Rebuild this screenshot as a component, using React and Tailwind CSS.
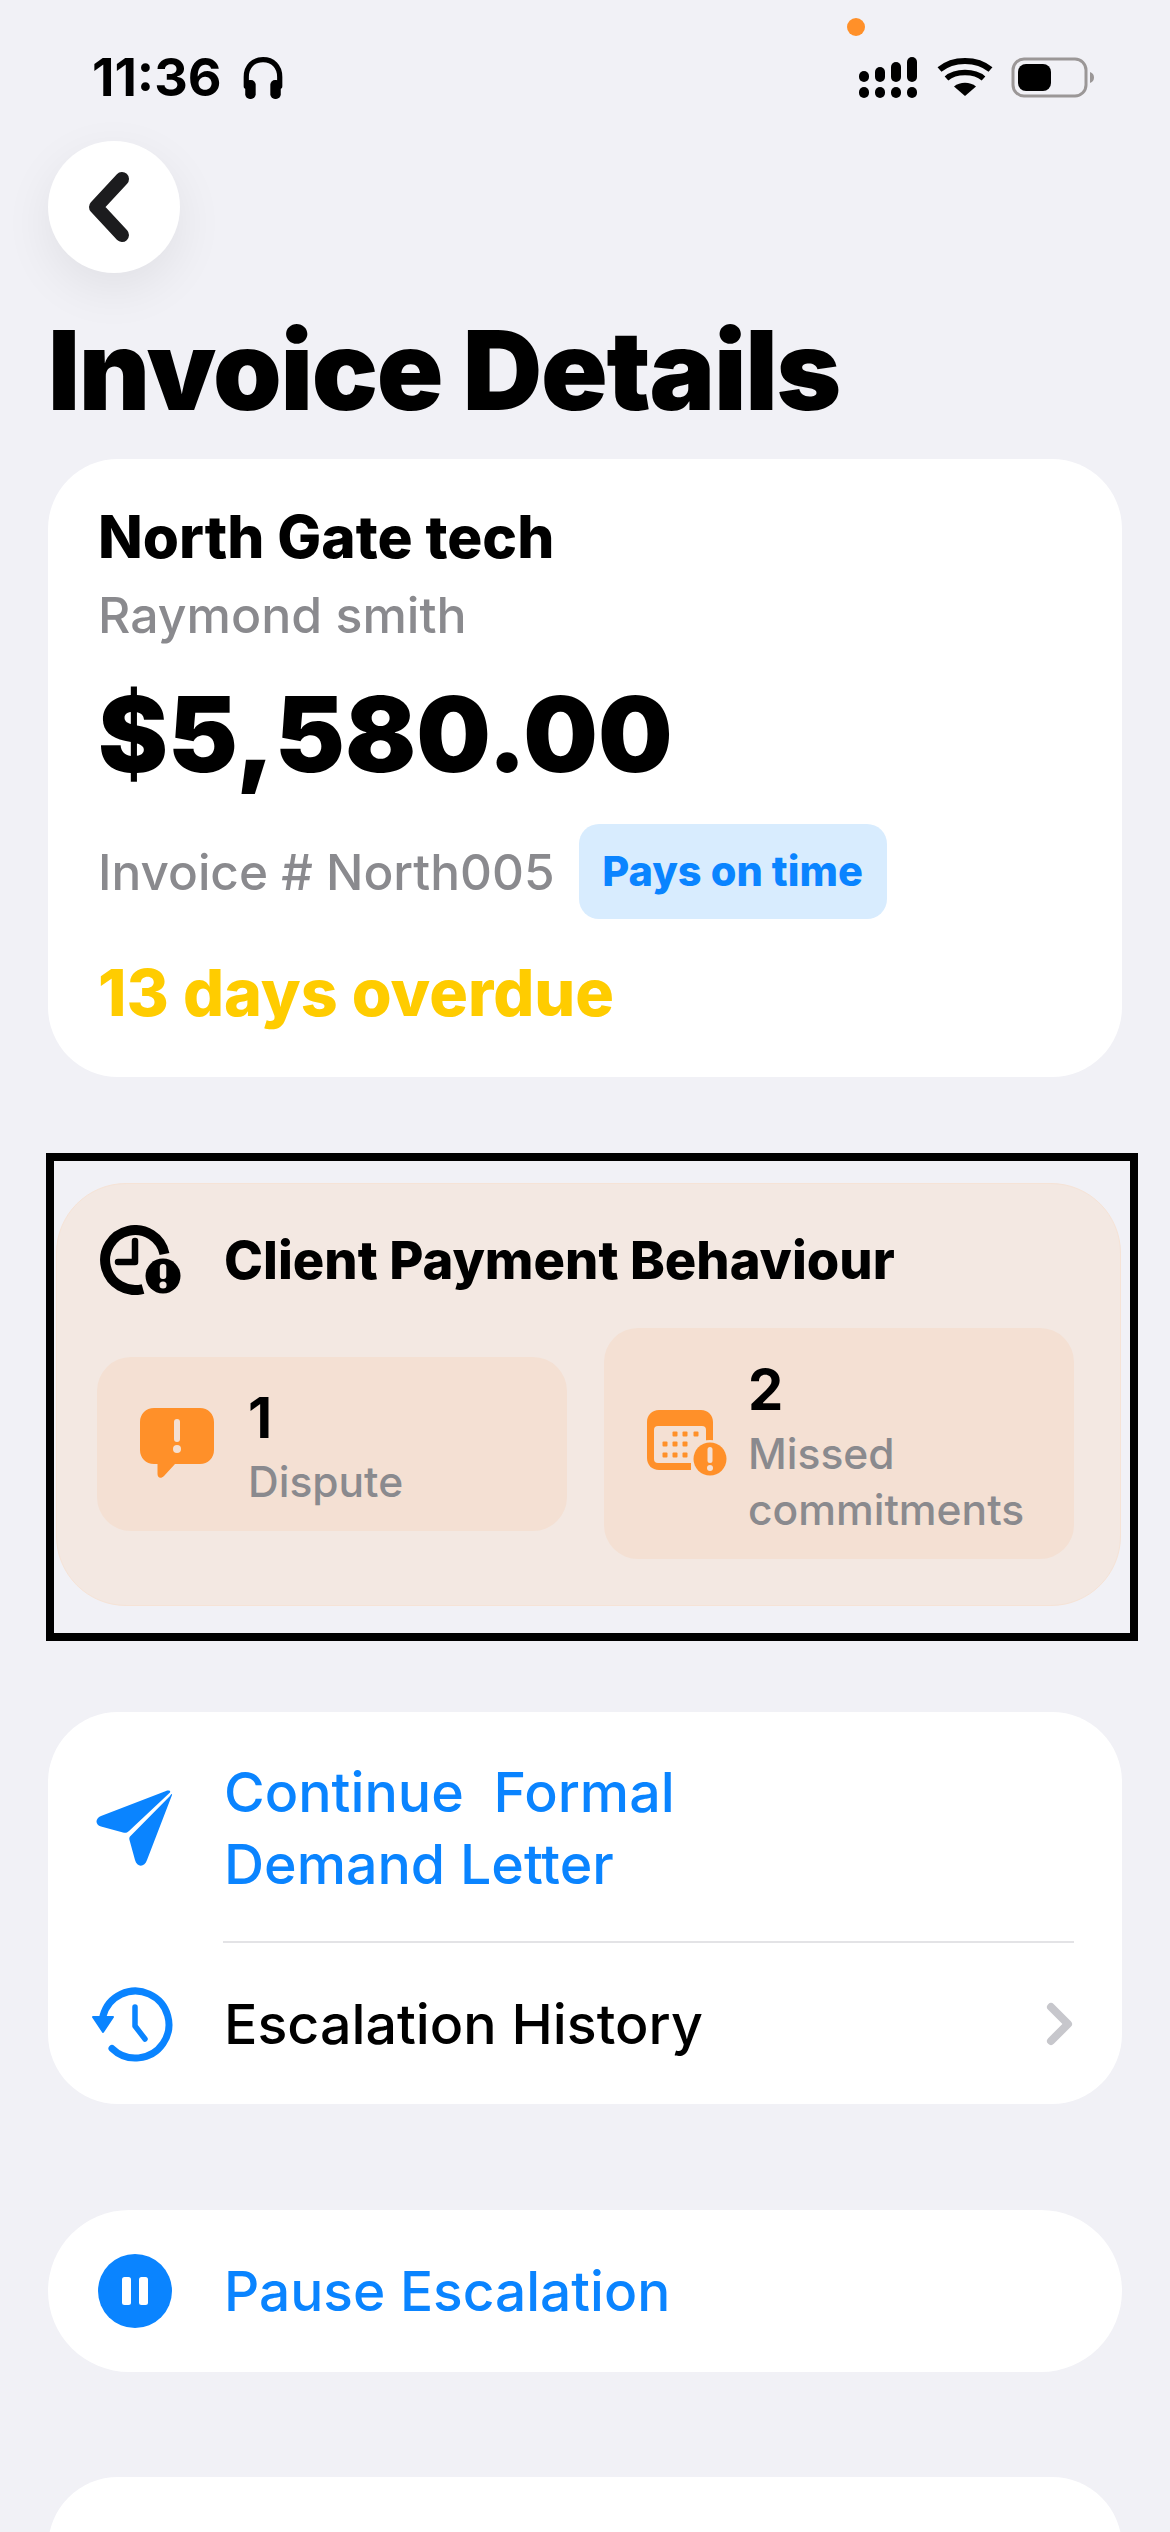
const FONT = 'font-["Inter",sans-serif]';

function Headphones() {
  return (
    <svg width="46" height="48" viewBox="0 0 44 44" fill="none">
      <path d="M6 30V21C6 11 12.500 4.500 22 4.500S38 11 38 21V30" stroke="black" strokeWidth="5" strokeLinecap="round" />
      <rect x="5" y="24" width="10" height="18" rx="4.500" fill="black" />
      <rect x="29" y="24" width="10" height="18" rx="4.500" fill="black" />
    </svg>
  );
}

function StatusIcons() {
  return (
    <svg width="238" height="42" viewBox="0 0 238 42">
      <g fill="black">
        <rect x="0" y="14" width="10" height="11" rx="5" />
        <rect x="16" y="10" width="10" height="15" rx="5" />
        <rect x="32" y="5" width="10" height="20" rx="5" />
        <rect x="48" y="0" width="10" height="25" rx="5" />
        <rect x="0" y="30" width="10" height="11" rx="5" />
        <rect x="16" y="30" width="10" height="11" rx="5" />
        <rect x="32" y="30" width="10" height="11" rx="5" />
        <rect x="48" y="30" width="10" height="11" rx="5" />
        <path d="M106 39L95 29.500C101 24.500 111 24.500 117 29.500Z" />
      </g>
      <path d="M87.500 21.500C96.500 13.500 115.500 13.500 124.500 21.500" stroke="black" strokeWidth="5.500" fill="none" />
      <path d="M80.500 12.500C94 1 118 1 131.500 12.500" stroke="black" strokeWidth="6" fill="none" />
      <rect x="154" y="2" width="73" height="37" rx="11" fill="none" stroke="#9b9797" strokeWidth="3" />
      <rect x="159" y="7" width="33" height="27" rx="8" fill="black" />
      <path d="M231 15C234 16 235 18 235 20.500S234 25 231 26Z" fill="#9b9797" />
    </svg>
  );
}

function BackChevron() {
  return (
    <svg width="44" height="72" viewBox="0 0 44 72" fill="none">
      <path d="M35 8L9 36L35 64" stroke="#1c1c1e" strokeWidth="14" strokeLinecap="round" strokeLinejoin="round" />
    </svg>
  );
}

function ClockAlert() {
  return (
    <svg width="82" height="70" viewBox="0 0 82 70" fill="none">
      <path d="M64.500 29A30 30 0 1 0 43 64" stroke="black" strokeWidth="10" />
      <path d="M35 16V37H18" stroke="black" strokeWidth="6.500" strokeLinecap="round" strokeLinejoin="round" />
      <circle cx="63" cy="51" r="17.500" fill="black" />
      <rect x="59.800" y="39" width="6.500" height="15" rx="3" fill="#f3e8e2" />
      <circle cx="63" cy="60" r="3.600" fill="#f3e8e2" />
    </svg>
  );
}

function DisputeIcon() {
  return (
    <svg width="74" height="72" viewBox="0 0 74 72">
      <path d="M14 0H60C68 0 74 6 74 14V42C74 50 68 56 60 56H35L24 68C21 71 17.500 70 17.500 66V56H14C6 56 0 50 0 42V14C0 6 6 0 14 0Z" fill="#ff9029" />
      <rect x="34" y="11" width="6" height="23" rx="3" fill="#f4e0d3" />
      <circle cx="37" cy="41" r="4" fill="#f4e0d3" />
    </svg>
  );
}

function CalendarAlert() {
  return (
    <svg width="80" height="68" viewBox="0 0 80 68">
      <path d="M12 0H54C61 0 66 5 66 12V50H44V60H12C5 60 0 55 0 48V12C0 5 5 0 12 0Z" fill="#ff9029" />
      <rect x="7" y="16" width="52" height="37" rx="4" fill="#f4e0d3" />
      <g fill="#ff9029">
        <rect x="25.500" y="21.500" width="5" height="5" rx="1" />
        <rect x="35.500" y="21.500" width="5" height="5" rx="1" />
        <rect x="46.500" y="21.500" width="5" height="5" rx="1" />
        <rect x="15.500" y="31.500" width="5" height="5" rx="1" />
        <rect x="25.500" y="31.500" width="5" height="5" rx="1" />
        <rect x="35.500" y="31.500" width="5" height="5" rx="1" />
        <rect x="15.500" y="42.500" width="5" height="5" rx="1" />
        <rect x="25.500" y="42.500" width="5" height="5" rx="1" />
        <rect x="35.500" y="42.500" width="5" height="5" rx="1" />
      </g>
      <circle cx="63" cy="49" r="19" fill="#f4e0d3" />
      <circle cx="63" cy="49" r="16.500" fill="#ff9029" />
      <rect x="60.500" y="37" width="5" height="16" rx="2.500" fill="#f4e0d3" />
      <circle cx="63" cy="58" r="3" fill="#f4e0d3" />
    </svg>
  );
}

function SendIcon() {
  return (
    <svg width="76" height="76" viewBox="0 0 76 76">
      <path d="M5 26L70 1C73 0 75 1 74 2.500L33 41C31 43 29 43 27 42.500L5 36.500C-1 34.500 -1 28.500 5 26Z" fill="#0a84ff" />
      <path d="M76 5L51 70C48.500 77.500 41 77.500 39 70L33.500 50C33 48 33.500 47 34.500 46L74 6C75.500 3.500 76.500 3.500 76 5Z" fill="#0a84ff" />
    </svg>
  );
}

function HistoryIcon() {
  return (
    <svg width="82" height="76" viewBox="0 0 82 76" fill="none">
      <path d="M11 30A33.500 33.500 0 1 1 20 62.500" stroke="#0a84ff" strokeWidth="7" strokeLinecap="round" />
      <path d="M1 31H21L11 46Z" fill="#0a84ff" stroke="#0a84ff" strokeWidth="2" strokeLinejoin="round" />
      <path d="M43 21V40L53 53" stroke="#0a84ff" strokeWidth="5.500" strokeLinecap="round" strokeLinejoin="round" />
    </svg>
  );
}

function ChevronRight() {
  return (
    <svg width="28" height="44" viewBox="0 0 28 44" fill="none">
      <path d="M5 5L22 22L5 39" stroke="#c7c7cc" strokeWidth="8" strokeLinecap="round" strokeLinejoin="round" />
    </svg>
  );
}

function PauseIcon() {
  return (
    <svg width="74" height="74" viewBox="0 0 74 74">
      <circle cx="37" cy="37" r="37" fill="#0a84ff" />
      <rect x="24" y="23" width="9" height="28" rx="2.500" fill="white" />
      <rect x="41" y="23" width="9" height="28" rx="2.500" fill="white" />
    </svg>
  );
}

function Stat({ icon, value, label, big }) {
  return (
    <div className={`flex flex-1 items-center rounded-[34px] bg-[#f4e0d3] ${big ? 'h-[231px] pl-[43px]' : 'h-[174px] pl-[43px]'}`}>
      <div className={big ? 'w-[101px] shrink-0' : 'w-[108px] shrink-0'}>{icon}</div>
      <div className="flex flex-col pt-[11px]">
        <span className="text-[56px] leading-[58px] font-bold text-black">{value}</span>
        <span className="mt-[7px] text-[42.500px] leading-[56px] font-medium text-[#8a8a8e]">{label}</span>
      </div>
    </div>
  );
}

export default function App() {
  return (
    <div className={`relative h-[2532px] w-[1170px] overflow-hidden bg-[#f1f1f6] ${FONT}`}>
      <div className="absolute left-[847px] top-[18px] h-[18px] w-[18px] rounded-full bg-[#ff9029]" />

      <div className="flex h-[141px] items-start justify-between pl-[92px] pr-[73px] pt-[50px]">
        <div className="flex items-center gap-[18px]">
          <span className="text-[52px] leading-[56px] font-bold text-black">11:36</span>
          <Headphones />
        </div>
        <div className="pt-[7px]">
          <StatusIcons />
        </div>
      </div>

      <div className="px-[48px]">
        <div className="flex h-[132px] w-[132px] items-center justify-center rounded-full bg-white pr-[10px] shadow-[0_16px_50px_rgba(0,0,0,0.07)]">
          <BackChevron />
        </div>

        <h1 className="mt-[34px] text-[110px] leading-[126px] font-black text-black tracking-[-1.300px]">Invoice Details</h1>

        <div className="mt-[26px] h-[618px] rounded-[70px] bg-white pl-[50px] pt-[46px]">
          <div className="text-[58.500px] leading-[64px] font-extrabold text-black">North Gate tech</div>
          <div className="mt-[17px] text-[50px] leading-[58px] font-medium text-[#8a8a8e]">Raymond smith</div>
          <div className="mt-[27px] text-[105px] leading-[126px] font-black text-black">$5,580.00</div>
          <div className="mt-[27px] flex items-center gap-[24px]">
            <span className="text-[49.500px] leading-[58px] font-medium text-[#8a8a8e]">Invoice # North005</span>
            <span className="flex h-[95px] w-[308px] items-center justify-center rounded-[20px] bg-[#d8ecfe] text-[41.500px] font-extrabold text-[#0a84ff]">Pays on time</span>
          </div>
          <div className="mt-[38px] text-[64.500px] leading-[72px] font-extrabold text-[#ffcc00]">13 days overdue</div>
        </div>

        <div className="mt-[76px] -ml-[2px] h-[488px] w-[1092px] border-[8px] border-black pl-[2px] pr-[9px] pt-[22px]">
          <div className="h-[423px] rounded-[70px] border border-[#f6e3d6] bg-[#f3e8e2]">
            <div className="flex h-[144px] items-center pl-[43px] pt-[8px]">
              <div className="w-[124px] shrink-0">
                <ClockAlert />
              </div>
              <span className="text-[52.500px] font-extrabold text-black">Client Payment Behaviour</span>
            </div>
            <div className="flex items-center gap-[37px] pl-[40px] pr-[46px]">
              <Stat icon={<DisputeIcon />} value="1" label="Dispute" />
              <Stat icon={<CalendarAlert />} value="2" label={<>Missed<br />commitments</>} big />
            </div>
          </div>
        </div>

        <div className="mt-[71px] h-[392px] rounded-[70px] bg-white">
          <div className="flex h-[229px] items-start pt-[44px]">
            <div className="ml-[48px] mt-[34px] w-[128px] shrink-0">
              <SendIcon />
            </div>
            <div className="text-[55.500px] leading-[72px] font-medium whitespace-pre text-[#0a84ff]">{'Continue  Formal\nDemand Letter'}</div>
          </div>
          <div className="ml-[175px] mr-[48px] h-[2px] bg-[#e3e3e6]" />
          <div className="flex h-[161px] items-center pr-[48px]">
            <div className="ml-[44px] w-[132px] shrink-0">
              <HistoryIcon />
            </div>
            <span className="flex-1 text-[55.500px] font-medium text-black">Escalation History</span>
            <ChevronRight />
          </div>
        </div>

        <div className="mt-[106px] flex h-[162px] items-center rounded-[81px] bg-white">
          <div className="ml-[50px] w-[126px] shrink-0">
            <PauseIcon />
          </div>
          <span className="text-[55px] font-medium text-[#0a84ff]">Pause Escalation</span>
        </div>

        <div className="mt-[105px] h-[200px] rounded-[70px] bg-white" />
      </div>
    </div>
  );
}
